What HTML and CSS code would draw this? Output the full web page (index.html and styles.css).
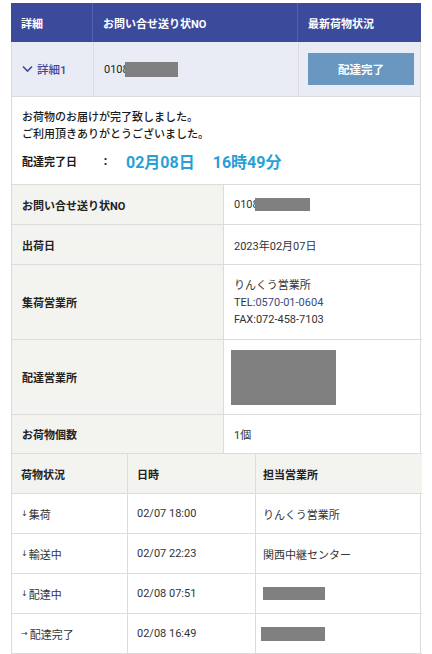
FILE: index.html
```html
<!DOCTYPE html>
<html lang="ja">
<head>
<meta charset="utf-8">
<link rel="stylesheet" href="styles.css">
</head>
<body>
<div class="wrap">
  <div class="head grid3">
    <div class="hc">詳細</div>
    <div class="hc">お問い合せ送り状NO</div>
    <div class="hc">最新荷物状況</div>
  </div>
  <div class="sumrow grid3">
    <div class="sc toggle"><svg class="chev" width="11" height="8" viewBox="0 0 11 8"><path d="M1 1.5 L5.5 6 L10 1.5" fill="none" stroke="#3b4a9b" stroke-width="1.6"/></svg><span>詳細1</span></div>
    <div class="sc">0108<span class="mask m1"></span></div>
    <div class="sc btncell"><div class="btn">配達完了</div></div>
  </div>
  <div class="detail">
    <p class="msg">お荷物のお届けが完了致しました。</p>
    <p class="msg">ご利用頂きありがとうございました。</p>
    <p class="done"><span class="dl">配達完了日</span><span class="colon">：</span><span class="big">02月08日</span><span class="big t">16時49分</span></p>
  </div>
  <div class="info">
    <div class="lab r40">お問い合せ送り状NO</div><div class="val r40">0108<span class="mask m2"></span></div>
    <div class="lab r40">出荷日</div><div class="val r40">2023年02月07日</div>
    <div class="lab r75">集荷営業所</div><div class="val r75 multi"><span>りんくう営業所</span><span>TEL:<a class="tel">0570-01-0604</a></span><span>FAX:072-458-7103</span></div>
    <div class="lab r75">配達営業所</div><div class="val r75"><span class="mask m3"></span></div>
    <div class="lab r39">お荷物個数</div><div class="val r39">1個</div>
  </div>
  <div class="hist">
    <div class="hh">荷物状況</div><div class="hh">日時</div><div class="hh">担当営業所</div>
    <div class="hd"><span class="arr">↓</span>集荷</div><div class="hd">02/07 18:00</div><div class="hd">りんくう営業所</div>
    <div class="hd"><span class="arr">↓</span>輸送中</div><div class="hd">02/07 22:23</div><div class="hd">関西中継センター</div>
    <div class="hd"><span class="arr">↓</span>配達中</div><div class="hd">02/08 07:51</div><div class="hd"><span class="mask m4"></span></div>
    <div class="hd"><span class="arr r">→</span>配達完了</div><div class="hd">02/08 16:49</div><div class="hd"><span class="mask m5"></span></div>
    <div class="hd"></div><div class="hd"></div><div class="hd"></div>
  </div>
</div>
</body>
</html>
```
FILE: styles.css
```css
* { box-sizing: border-box; }
html, body { margin: 0; padding: 0; background: #fff; }
body {
  font-family: Roboto, "Noto Sans CJK JP", sans-serif;
  font-size: 11px;
  color: #333;
  height: 654px;
  overflow: hidden;
}
.wrap {
  margin: 3px 0 0 11px;
  width: 410px;
}
.grid3 {
  display: grid;
  grid-template-columns: 82px 205px 123px;
}
.head {
  height: 39px;
  background: #3b4a9b;
}
.hc {
  color: #fff;
  font-weight: 700;
  display: flex;
  align-items: center;
  padding-left: 10px;
  border-right: 1px solid #5361ab;
}
.hc:last-child { border-right: none; }
.sumrow {
  height: 55px;
  background: #e9ecf4;
  border-bottom: 1px solid #dcdcdc;
  border-left: 1px solid #dcdcdc;
  border-right: 1px solid #dcdcdc;
}
.sc {
  display: flex;
  align-items: center;
  padding-left: 10px;
  border-right: 1px solid #dcdcdc;
  color: #222;
}
.sc:last-child { border-right: none; }
.toggle { color: #3b4a9b; font-weight: 500; gap: 4px; font-size: 11.5px; }
.chev { display: block; }
.btncell { padding: 0 8px 0 9px; }
.btn {
  width: 100%;
  height: 32px;
  background: #6a97bf;
  color: #fff;
  font-weight: 700;
  display: flex;
  align-items: center;
  justify-content: center;
  font-size: 11.5px;
}
.mask { display: inline-block; background: #808080; }
.m1 { width: 53px; height: 15px; margin-left: -4px; }
.m2 { width: 55px; height: 13px; margin-left: -4px; }
.m3 { width: 105px; height: 55px; margin-left: -3px; }
.m4 { width: 62px; height: 13px; }
.m5 { width: 64px; height: 14px; margin-left: -2px; }
.detail {
  height: 88px;
  border-left: 1px solid #dcdcdc;
  border-right: 1px solid #dcdcdc;
  border-bottom: 1px solid #dcdcdc;
  padding: 12px 10px 0;
  color: #1a1a1a;
}
.detail p { margin: 0; }
.msg { line-height: 17px; font-weight: 500; }
.done {
  display: flex;
  align-items: center;
  margin-top: 7px !important;
  height: 22px;
}
.dl { width: 78px; font-weight: 700; }
.colon { width: 26px; font-weight: 700; }
.big {
  color: #2a9fd6;
  font-size: 16px;
  font-weight: 700;
}
.big.t { margin-left: 18px; }
.info {
  display: grid;
  grid-template-columns: 212px 198px;
  border-left: 1px solid #dcdcdc;
  border-right: 1px solid #dcdcdc;
}
.info > div {
  border-bottom: 1px solid #dcdcdc;
  display: flex;
  align-items: center;
  padding-left: 10px;
}
.lab {
  background: #f3f3f0;
  font-weight: 700;
  color: #222;
  border-right: 1px solid #dcdcdc;
}
.val { color: #333; }
.r40 { height: 40px; }
.r75 { height: 75px; }
.r39 { height: 39px; }
.multi {
  flex-direction: column;
  align-items: flex-start !important;
  justify-content: center;
  line-height: 17px;
}
.tel { color: #3a4a86; }
.hist {
  display: grid;
  grid-template-columns: 116px 128px 166px;
  grid-auto-rows: 40px;
  border-left: 1px solid #dcdcdc;
  border-right: 1px solid #dcdcdc;
}
.hist > div {
  border-bottom: 1px solid #dcdcdc;
  border-right: 1px solid #dcdcdc;
  display: flex;
  align-items: center;
  padding-left: 9px;
}
.hist > div:nth-child(3n) { border-right: none; padding-left: 7px; }
.hh { background: #f3f3f0; font-weight: 700; color: #222; }
.hd { color: #333; }
.arr { font-size: 8px; margin-right: 1px; font-family: "DejaVu Sans", sans-serif; }
.arr.r { font-size: 8px; margin-right: 2px; }
```
